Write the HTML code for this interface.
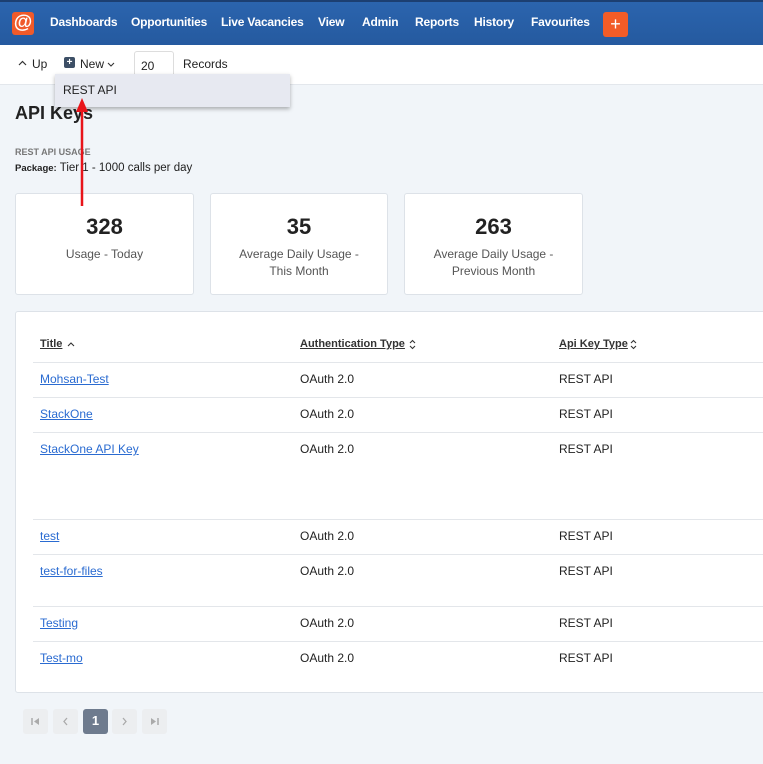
<!DOCTYPE html>
<html><head><style>
*{box-sizing:border-box;margin:0;padding:0}
body{width:763px;height:764px;overflow:hidden;background:#f1f5f9;font-family:"Liberation Sans",sans-serif;color:#222;position:relative}
.nav{position:absolute;left:0;top:0;width:763px;height:45px;background:linear-gradient(#2b64ae,#255a9f);border-top:2px solid #1c3f72}
.nav span{position:absolute;top:13px;color:#fff;font-weight:bold;font-size:12px;letter-spacing:-0.2px}
.logo{position:absolute;left:12px;top:10px;width:22px;height:23px;background:#f05a2a;border-radius:3px;color:#fff;font-size:19px;text-align:center;line-height:21px;font-weight:bold}
.plus{position:absolute;left:603px;top:10px;width:25px;height:25px;background:#f25c27;border-radius:3px;color:#fff;text-align:center;font-size:18px;line-height:24px}
.tb{position:absolute;left:0;top:45px;width:763px;height:40px;background:#fff;border-bottom:1px solid #e3e7ec;font-size:12px}
.tb span{position:absolute;top:12px}
.inp{position:absolute;left:134px;top:6px;width:40px;height:28px;border:1px solid #ddd;border-radius:3px;padding:7px 6px;font-size:12px}
.dd{position:absolute;left:55px;top:74px;width:235px;height:33px;background:#e7e9f1;box-shadow:0 2px 4px rgba(0,0,0,.3);font-size:12px;padding:9px 8px;z-index:3}
.a{position:absolute}
.card{position:absolute;top:193px;height:102px;background:#fff;border:1px solid #dde2e8;border-radius:3px;text-align:center}
.card b{display:block;font-size:22px;margin-top:20px;color:#222}
.card p{font-size:12px;color:#555;margin-top:6px;line-height:17px}
.tbl{position:absolute;left:15px;top:311px;width:760px;height:382px;background:#fff;border:1px solid #dde2e8;border-radius:3px}
.row{position:absolute;left:33px;width:760px;border-top:1px solid #e3e6ea;font-size:12px}
.row span{position:absolute;top:9px}
.l{color:#2a6bd1;text-decoration:underline}
.h{position:absolute;top:338px;font-size:11px;font-weight:bold;color:#333;text-decoration:underline}
.pg{position:absolute;top:709px;width:25px;height:25px;background:#eceef0;border-radius:3px}
.pg svg{position:absolute;left:7px;top:7px}
</style></head><body>
<div class="nav">
<div class="logo">@</div>
<span style="left:50px">Dashboards</span><span style="left:131px">Opportunities</span><span style="left:221px">Live Vacancies</span><span style="left:318px">View</span><span style="left:362px">Admin</span><span style="left:415px">Reports</span><span style="left:474px">History</span><span style="left:531px">Favourites</span>
<div class="plus">+</div>
</div>
<div class="tb">
<svg style="position:absolute;left:18px;top:15px" width="9" height="6"><path d="M1 5L4.5 1.5L8 5" stroke="#333" fill="none" stroke-width="1.2"/></svg>
<span style="left:32px">Up</span>
<span style="left:64px;top:12px;width:11px;height:11px;background:#3d4f66;border-radius:2px;color:#fff;font-size:10px;line-height:11px;text-align:center;font-weight:bold">+</span>
<span style="left:80px">New</span>
<svg style="position:absolute;left:107px;top:17px" width="8" height="5"><path d="M1 1L4 4L7 1" stroke="#333" fill="none" stroke-width="1.1"/></svg>
<div class="inp">20</div>
<span style="left:183px">Records</span>
</div>
<div class="dd">REST API</div>
<svg class="a" style="left:74px;top:96px;z-index:4" width="16" height="112"><path d="M8 14V110" stroke="#e8141a" stroke-width="2.5"/><path d="M2 16L8 2L14 16Z" fill="#e8141a"/></svg>
<div class="a" style="left:15px;top:103px;font-size:18px;font-weight:bold">API Keys</div>
<div class="a" style="left:15px;top:147px;font-size:9px;font-weight:bold;color:#777">REST API USAGE</div>
<div class="a" style="left:15px;top:162px;font-size:11.5px"><b style="font-size:9.5px">Package:</b> Tier 1 - 1000 calls per day</div>
<div class="card" style="left:15px;width:179px"><b>328</b><p>Usage - Today</p></div>
<div class="card" style="left:210px;width:178px"><b>35</b><p>Average Daily Usage -<br>This Month</p></div>
<div class="card" style="left:404px;width:179px"><b>263</b><p>Average Daily Usage -<br>Previous Month</p></div>
<div class="tbl"></div>
<div class="h" style="left:40px">Title</div>
<svg class="a" style="left:67px;top:342px" width="8" height="5"><path d="M1 4L4 1L7 4" stroke="#333" fill="none" stroke-width="1.1"/></svg>
<div class="h" style="left:300px">Authentication Type</div>
<svg class="a" style="left:409px;top:339px" width="7" height="11"><path d="M1 4L3.5 1.5L6 4M1 7L3.5 9.5L6 7" stroke="#333" fill="none" stroke-width="1.1"/></svg>
<div class="h" style="left:559px">Api Key Type</div>
<svg class="a" style="left:630px;top:339px" width="7" height="11"><path d="M1 4L3.5 1.5L6 4M1 7L3.5 9.5L6 7" stroke="#333" fill="none" stroke-width="1.1"/></svg>
<div class="row" style="top:362px"><span class="l" style="left:7px">Mohsan-Test</span><span style="left:267px">OAuth 2.0</span><span style="left:526px">REST API</span></div>
<div class="row" style="top:397px"><span class="l" style="left:7px">StackOne</span><span style="left:267px">OAuth 2.0</span><span style="left:526px">REST API</span></div>
<div class="row" style="top:432px"><span class="l" style="left:7px">StackOne API Key</span><span style="left:267px">OAuth 2.0</span><span style="left:526px">REST API</span></div>
<div class="row" style="top:519px"><span class="l" style="left:7px">test</span><span style="left:267px">OAuth 2.0</span><span style="left:526px">REST API</span></div>
<div class="row" style="top:554px"><span class="l" style="left:7px">test-for-files</span><span style="left:267px">OAuth 2.0</span><span style="left:526px">REST API</span></div>
<div class="row" style="top:606px"><span class="l" style="left:7px">Testing</span><span style="left:267px">OAuth 2.0</span><span style="left:526px">REST API</span></div>
<div class="row" style="top:641px"><span class="l" style="left:7px">Test-mo</span><span style="left:267px">OAuth 2.0</span><span style="left:526px">REST API</span></div>
<div class="pg" style="left:23px"><svg width="11" height="11"><path d="M2 2V9" stroke="#aaa" stroke-width="1.5"/><path d="M9 2L4 5.5L9 9Z" fill="#aaa"/></svg></div>
<div class="pg" style="left:53px"><svg width="11" height="11"><path d="M7 2L4 5.5L7 9" stroke="#aaa" fill="none" stroke-width="1.3"/></svg></div>
<div class="pg" style="left:83px;background:#6e7b8e;color:#fff;font-weight:bold;text-align:center;line-height:24px;font-size:13px">1</div>
<div class="pg" style="left:112px"><svg width="11" height="11"><path d="M4 2L7 5.5L4 9" stroke="#aaa" fill="none" stroke-width="1.3"/></svg></div>
<div class="pg" style="left:142px"><svg width="11" height="11"><path d="M2 2L7 5.5L2 9Z" fill="#aaa"/><path d="M9 2V9" stroke="#aaa" stroke-width="1.5"/></svg></div>
</body></html>
